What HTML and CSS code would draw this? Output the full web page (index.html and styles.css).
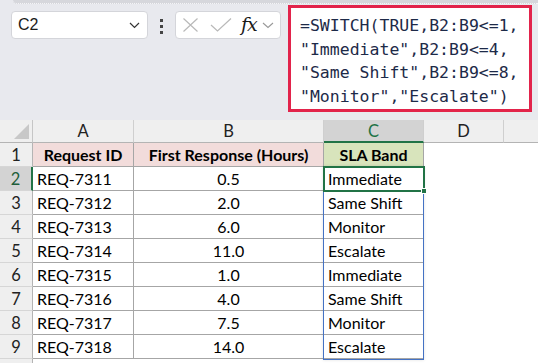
FILE: index.html
```html
<!DOCTYPE html>
<html>
<head>
<meta charset="utf-8">
<link rel="stylesheet" href="styles.css">
</head>
<body>
<div class="app">
  <div class="bar">
    <div class="ribbon-edge"></div>
    <div class="bar-row">
      <div class="namebox">
        <span class="ref">C2</span>
        <svg class="chev" width="11" height="7" viewBox="0 0 11 7"><path d="M1 1 L5.5 5.5 L10 1" fill="none" stroke="#333" stroke-width="1.2"/></svg>
      </div>
      <div class="dots"><i></i><i></i><i></i></div>
      <div class="fxbox">
        <svg class="ico" width="17" height="14" viewBox="0 0 17 14"><path d="M1.5 0.5 L15.5 13.5 M15.5 0.5 L1.5 13.5" stroke="#b9b9b9" stroke-width="1.2" fill="none"/></svg>
        <svg class="ico" width="22" height="14" viewBox="0 0 22 14"><path d="M1 7 L7.5 13 L21 0.5" stroke="#b9b9b9" stroke-width="1.2" fill="none"/></svg>
        <span class="fx">fx</span>
        <svg class="chev2" width="12" height="7" viewBox="0 0 12 7"><path d="M1 1 L6 5.5 L11 1" fill="none" stroke="#999" stroke-width="1.1"/></svg>
      </div>
      <div class="formula"><div class="fl">=SWITCH(TRUE,B2:B9&lt;=1,</div><div class="fl">"Immediate",B2:B9&lt;=4,</div><div class="fl">"Same Shift",B2:B9&lt;=8,</div><div class="fl">"Monitor","Escalate")</div></div>
    </div>
  </div>
  <div class="sheet">
    <div class="hd corner"><span class="tri"></span></div>
    <div class="hd col">A</div>
    <div class="hd col">B</div>
    <div class="hd col active">C</div>
    <div class="hd col">D</div>
    <div class="hd col last"></div>

    <div class="hd row">1</div>
    <div class="c h pink">Request ID</div>
    <div class="c h pink">First Response (Hours)</div>
    <div class="c h green">SLA Band</div>
    <div class="e"></div><div class="e"></div>

    <div class="hd row active">2</div>
    <div class="c">REQ-7311</div><div class="c num">0.5</div><div class="c">Immediate</div>
    <div class="e"></div><div class="e"></div>

    <div class="hd row">3</div>
    <div class="c">REQ-7312</div><div class="c num">2.0</div><div class="c">Same Shift</div>
    <div class="e"></div><div class="e"></div>

    <div class="hd row">4</div>
    <div class="c">REQ-7313</div><div class="c num">6.0</div><div class="c">Monitor</div>
    <div class="e"></div><div class="e"></div>

    <div class="hd row">5</div>
    <div class="c">REQ-7314</div><div class="c num">11.0</div><div class="c">Escalate</div>
    <div class="e"></div><div class="e"></div>

    <div class="hd row">6</div>
    <div class="c">REQ-7315</div><div class="c num">1.0</div><div class="c">Immediate</div>
    <div class="e"></div><div class="e"></div>

    <div class="hd row">7</div>
    <div class="c">REQ-7316</div><div class="c num">4.0</div><div class="c">Same Shift</div>
    <div class="e"></div><div class="e"></div>

    <div class="hd row">8</div>
    <div class="c">REQ-7317</div><div class="c num">7.5</div><div class="c">Monitor</div>
    <div class="e"></div><div class="e"></div>

    <div class="hd row">9</div>
    <div class="c">REQ-7318</div><div class="c num">14.0</div><div class="c">Escalate</div>
    <div class="e"></div><div class="e"></div>

    <div class="hd row"></div>

    <div class="spill"></div>
    <div class="sel"></div>
    <div class="handle"></div>
  </div>
</div>
</body>
</html>
```
FILE: styles.css
```css
* { box-sizing: border-box; }
html, body { margin: 0; padding: 0; }
body { width: 538px; height: 363px; overflow: hidden; background: #fff; }
.app { width: 538px; height: 363px; overflow: hidden; }

.bar { height: 120px; background: #e8e9ee; position: relative; }
.ribbon-edge {
  position: absolute; left: 13px; right: 0; top: 0; height: 4px;
  background: #d6d7dc; border-bottom: 1px dotted #f4f4f6; border-bottom-left-radius: 4px;
}
.bar-row { display: flex; align-items: flex-start; }

.namebox {
  margin: 11px 0 0 11px; width: 137px; height: 28px;
  background: #fff; border: 1px solid #d4d5da; border-radius: 4px;
  display: flex; align-items: center; justify-content: space-between;
  padding: 0 7px 0 6px;
}
.ref { font-family: "Liberation Sans", Arial, sans-serif; font-size: 16px; color: #1b1b1b; }
.chev { margin-top: 1px; }

.dots { width: 27px; margin-top: 19px; display: flex; flex-direction: column; align-items: center; gap: 3px; }
.dots i { display: block; width: 3px; height: 3px; background: #444; }

.fxbox {
  margin-top: 11px; width: 106px; height: 28px;
  background: #fff; border: 1px solid #d4d5da; border-radius: 4px;
  display: flex; align-items: center; padding-left: 6px;
}
.fxbox .ico { margin-right: 11px; }
.fxbox .ico + .ico { margin-right: 9px; }
.fx { font-family: "DejaVu Serif", "Liberation Serif", serif; font-style: italic; font-size: 19px; color: #1a1a1a; letter-spacing: -1px; margin-top: -2px; }
.chev2 { margin-left: 5px; }

.formula {
  margin: 5px 0 0 7px; width: 244px; height: 107px;
  background: #fff; border: 3px solid #e2234b;
  padding: 6px 0 0 9px;
  font-family: "DejaVu Sans Mono", "Liberation Mono", monospace;
  font-size: 16.5px; line-height: 23.5px; color: #1d2a48;
}
.fl { white-space: pre; }

.sheet {
  position: relative;
  display: grid;
  grid-template-columns: 33px 101px 190px 100px 80px 34px;
  grid-template-rows: 23px repeat(9, 24px) 24px;
  font-family: Lato, "Open Sans", sans-serif;
  font-size: 16px; color: #000;
}
.hd { background: #efefef; display: flex; align-items: center; justify-content: center; color: #222; font-size: 16.5px; }
.corner { border-right: 1px solid #c6c6c6; border-bottom: 1px solid #b4b4b4; position: relative; }
.tri {
  position: absolute; right: 3px; bottom: 3px; width: 0; height: 0;
  border-left: 15px solid transparent; border-bottom: 15px solid #c8c8c8;
}
.col { border-right: 1px solid #cfcfcf; border-bottom: 1px solid #b4b4b4; }
.col.last { border-right: none; }
.col.active { background: #d3d3d3; color: #217346; border-bottom: 2px solid #217346; }
.row { border-right: 1px solid #b4b4b4; border-bottom: 1px solid #d6d6d6; }
.row.active { background: #d3d3d3; color: #1e5e3a; border-right: 2px solid #217346; }

.c {
  border-right: 1px solid #a6a6a6; border-bottom: 1px solid #a6a6a6;
  display: flex; align-items: center; padding-left: 4px; white-space: nowrap; overflow: hidden;
}
.c.num { justify-content: center; padding-left: 0; }
.c.h { font-weight: bold; justify-content: center; padding-left: 0; }
.pink { background: #f2dcdb; }
.green { background: #d8e4bc; }
.e { background: #fff; }

.spill {
  position: absolute; left: 323px; top: 46px; width: 101px; height: 194px;
  border: 1px solid #4472c4; box-shadow: 0 0 3px rgba(0,0,0,0.12);
  pointer-events: none;
}
.sel {
  position: absolute; left: 323px; top: 46px; width: 102px; height: 26px;
  border: 2px solid #217346;
}
.handle {
  position: absolute; left: 421px; top: 68px; width: 6px; height: 6px;
  background: #217346; border: 1px solid #fff;
}
```
